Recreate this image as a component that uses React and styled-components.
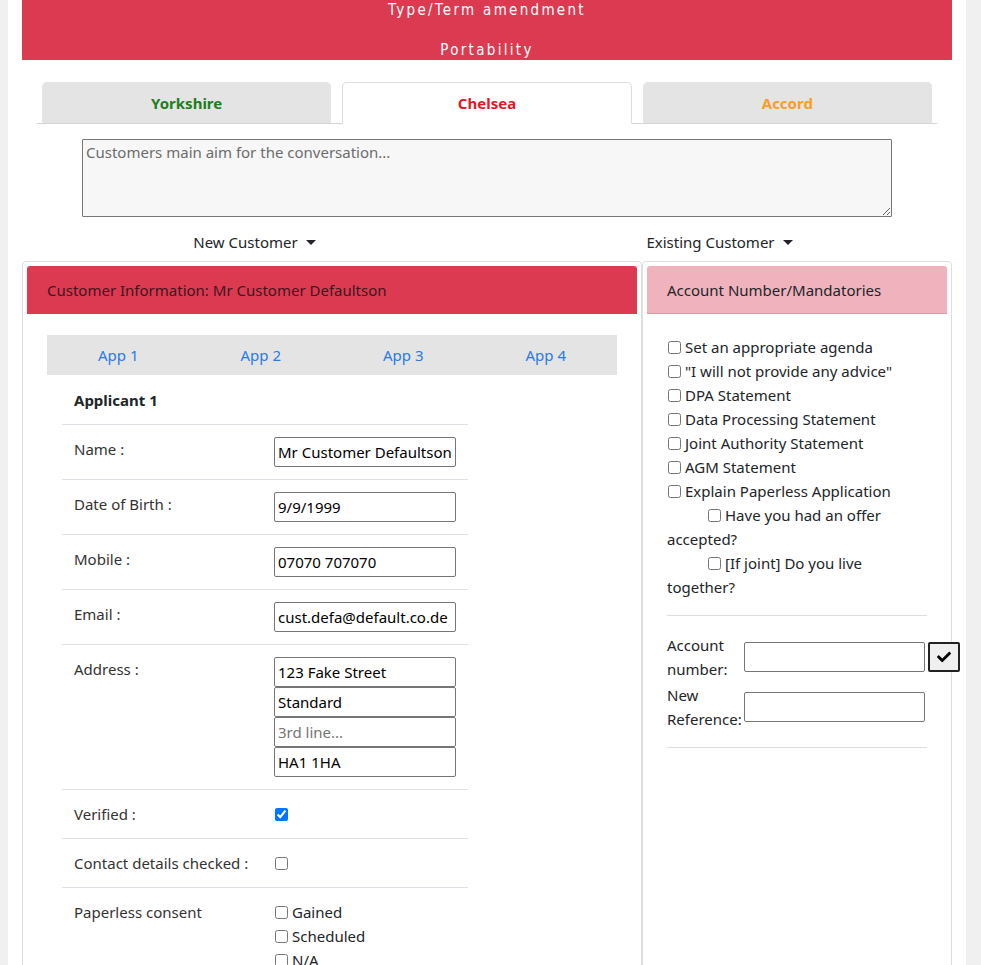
import React from 'react';
import styled, {createGlobalStyle} from 'styled-components';
import {FaCheck} from 'react-icons/fa';

const GlobalStyle = createGlobalStyle`
  body {
    margin: 0;
    background: #f0f0f0;
    font-family: "Noto Sans", "Open Sans", sans-serif;
    font-size: 15px;
    color: #212529;
  }
  * { box-sizing: border-box; }
`

const Page = styled.div`
  margin-left: 8px;
  width: 958px;
  min-height: 965px;
  background: #fff;
  padding: 0 14px;
  overflow: hidden;
`

const Banner = styled.div`
  height: 60px;
  background: #dc3a51;
  color: #fff;
  text-align: center;
  font-family: "DejaVu Sans Condensed", "Liberation Sans Narrow", "DejaVu Sans", sans-serif;
  font-stretch: condensed;
  font-size: 15px;
  letter-spacing: 2.3px;
`

const BannerLine = styled.div`
  height: 20px;
  line-height: 20px;
  & + & { margin-top: 20px; }
`

const TabBar = styled.div`
  display: flex;
  gap: 11px;
  margin: 22px 15px 0;
  padding: 0 5px;
  border-bottom: 1px solid #d4d4d4;
`

const Tab = styled.div`
  flex: 1;
  height: 42px;
  margin-bottom: -1px;
  display: flex;
  align-items: center;
  justify-content: center;
  border-radius: 5px 5px 0 0;
  font-weight: 700;
  font-size: 15px;
  color: ${p => p.$color};
  background: ${p => (p.$active ? '#fff' : '#e4e4e4')};
  border: 1px solid ${p => (p.$active ? '#dedede' : '#e4e4e4')};
  border-bottom-color: ${p => (p.$active ? '#fff' : '#d4d4d4')};
`

const AimBox = styled.textarea`
  display: block;
  width: 810px;
  height: 78px;
  margin: 15px auto 0;
  background: #f7f7f7;
  border: 1px solid #777;
  border-radius: 1px;
  padding: 2px 3px;
  font-family: inherit;
  font-size: 15px;
  resize: vertical;
  &::placeholder { color: #6c6c6c; }
`

const ToggleRow = styled.div`
  display: flex;
  margin-top: 14px;
  height: 30px;
`

const Toggle = styled.div`
  flex: 1;
  text-align: center;
  line-height: 22px;
  &::after {
    content: '';
    display: inline-block;
    margin-left: 8px;
    vertical-align: 3px;
    border-top: 5px solid #212529;
    border-left: 5px solid transparent;
    border-right: 5px solid transparent;
  }
`

const Cards = styled.div`
  display: flex;
  align-items: stretch;
`

const Card = styled.div`
  width: ${p => p.$width}px;
  min-height: 720px;
  border: 1px solid #dedede;
  border-radius: 4px;
  padding: 4px;
`

const CardHead = styled.div`
  height: 48px;
  display: flex;
  align-items: center;
  padding: 0 20px;
  border-radius: 3px 3px 0 0;
  background: ${p => p.$bg};
  color: ${p => p.$fg};
  border-bottom: 1px solid ${p => p.$line};
`

const AppBar = styled.div`
  display: grid;
  grid-template-columns: repeat(4, 1fr);
  margin: 21px 20px 0;
  height: 40px;
  background: #e4e4e4;
`

const AppLink = styled.a`
  display: flex;
  align-items: center;
  justify-content: center;
  color: #2a7ae2;
  font-size: 15px;
  text-decoration: none;
`

const Table = styled.div`
  width: 406px;
  margin: 1px 0 0 35px;
`

const Row = styled.div`
  display: grid;
  grid-template-columns: 200px 206px;
  padding: 12px 0;
  line-height: 24px;
  border-top: ${p => (p.$first ? 'none' : '1px solid #dee2e6')};
  & > * { padding: 0 12px; }
`

const Heading = styled.div`
  font-weight: 700;
`

const Label = styled.div`
  color: #333;
`

const Field = styled.input`
  display: block;
  width: 182px;
  height: 30px;
  border: 1px solid #767676;
  border-radius: 2px;
  padding: 1px 3px;
  font-family: inherit;
  font-size: 15px;
  color: #000;
  &::placeholder { color: #757575; }
`

const Stack = styled.div`
  display: flex;
  flex-direction: column;
`

const CheckCell = styled.div`
  display: flex;
  flex-direction: column;
`

const Box = styled.input.attrs({type: 'checkbox'})`
  width: 13px;
  height: 13px;
  margin: 0 4px 0 1px;
  vertical-align: -1px;
`

const CheckLine = styled.label`
  display: block;
  line-height: 24px;
  text-indent: ${p => (p.$indent ? '40px' : '0')};
`

const SideBody = styled.div`
  padding: 21px 20px 0;
`

const Rule = styled.hr`
  border: 0;
  border-top: 1px solid #dedede;
  margin: 16px 0;
`

const AcctRow = styled.div`
  display: flex;
  align-items: flex-start;
  line-height: 24px;
  margin-top: ${p => p.$gap}px;
`

const AcctLabel = styled.div`
  width: 77px;
  flex: none;
`

const AcctInput = styled(Field)`
  width: 181px;
  margin-top: 9px;
`

const TickButton = styled.button`
  width: 32px;
  height: 30px;
  margin: 9px 0 0 3px;
  padding: 0;
  flex: none;
  display: flex;
  align-items: center;
  justify-content: center;
  background: #efefef;
  border: 2px solid #222;
  border-radius: 2px;
  color: #000;
  font-size: 15px;
`

const applicantRows = [
  ['Name :', 'Mr Customer Defaultson'],
  ['Date of Birth :', '9/9/1999'],
  ['Mobile :', '07070 707070'],
  ['Email :', 'cust.defa@default.co.de'],
]

const mandatories = [
  'Set an appropriate agenda',
  '"I will not provide any advice"',
  'DPA Statement',
  'Data Processing Statement',
  'Joint Authority Statement',
  'AGM Statement',
  'Explain Paperless Application',
]

const App = () => {
  return (
    <>
      <GlobalStyle/>
      <Page>
        <Banner>
          <BannerLine>Type/Term amendment</BannerLine>
          <BannerLine>Portability</BannerLine>
        </Banner>

        <TabBar>
          <Tab $color="#1f7d1f">Yorkshire</Tab>
          <Tab $color="#e3172a" $active>Chelsea</Tab>
          <Tab $color="#f4a025">Accord</Tab>
        </TabBar>

        <AimBox placeholder="Customers main aim for the conversation..."/>

        <ToggleRow>
          <Toggle>New Customer</Toggle>
          <Toggle>Existing Customer</Toggle>
        </ToggleRow>

        <Cards>
          <Card $width={620}>
            <CardHead $bg="#dc3a51" $fg="#3c161d" $line="#dc3a51">
              Customer Information: Mr Customer Defaultson
            </CardHead>
            <AppBar>
              <AppLink href="#">App 1</AppLink>
              <AppLink href="#">App 2</AppLink>
              <AppLink href="#">App 3</AppLink>
              <AppLink href="#">App 4</AppLink>
            </AppBar>
            <Table>
              <Row $first>
                <Heading>Applicant 1</Heading>
              </Row>
              {applicantRows.map(([label, value]) => (
                <Row key={label}>
                  <Label>{label}</Label>
                  <div><Field defaultValue={value}/></div>
                </Row>
              ))}
              <Row>
                <Label>Address :</Label>
                <Stack>
                  <Field defaultValue="123 Fake Street"/>
                  <Field defaultValue="Standard"/>
                  <Field placeholder="3rd line..."/>
                  <Field defaultValue="HA1 1HA"/>
                </Stack>
              </Row>
              <Row>
                <Label>Verified :</Label>
                <CheckCell><CheckLine><Box defaultChecked/></CheckLine></CheckCell>
              </Row>
              <Row>
                <Label>Contact details checked :</Label>
                <CheckCell><CheckLine><Box/></CheckLine></CheckCell>
              </Row>
              <Row>
                <Label>Paperless consent</Label>
                <CheckCell>
                  <CheckLine><Box/>Gained</CheckLine>
                  <CheckLine><Box/>Scheduled</CheckLine>
                  <CheckLine><Box/>N/A</CheckLine>
                </CheckCell>
              </Row>
            </Table>
          </Card>

          <Card $width={310}>
            <CardHead $bg="#f0b3bd" $fg="#212529" $line="#d29aa4">
              Account Number/Mandatories
            </CardHead>
            <SideBody>
              {mandatories.map(item => (
                <CheckLine key={item}><Box/>{item}</CheckLine>
              ))}
              <CheckLine $indent><Box/>Have you had an offer accepted?</CheckLine>
              <CheckLine $indent><Box/>[If joint] Do you live together?</CheckLine>
              <Rule/>
              <AcctRow $gap={17}>
                <AcctLabel>Account number:</AcctLabel>
                <AcctInput/>
                <TickButton><FaCheck size={14}/></TickButton>
              </AcctRow>
              <AcctRow $gap={2}>
                <AcctLabel>New Reference:</AcctLabel>
                <AcctInput/>
              </AcctRow>
              <Rule/>
            </SideBody>
          </Card>
        </Cards>
      </Page>
    </>
  );
};

export default App;
